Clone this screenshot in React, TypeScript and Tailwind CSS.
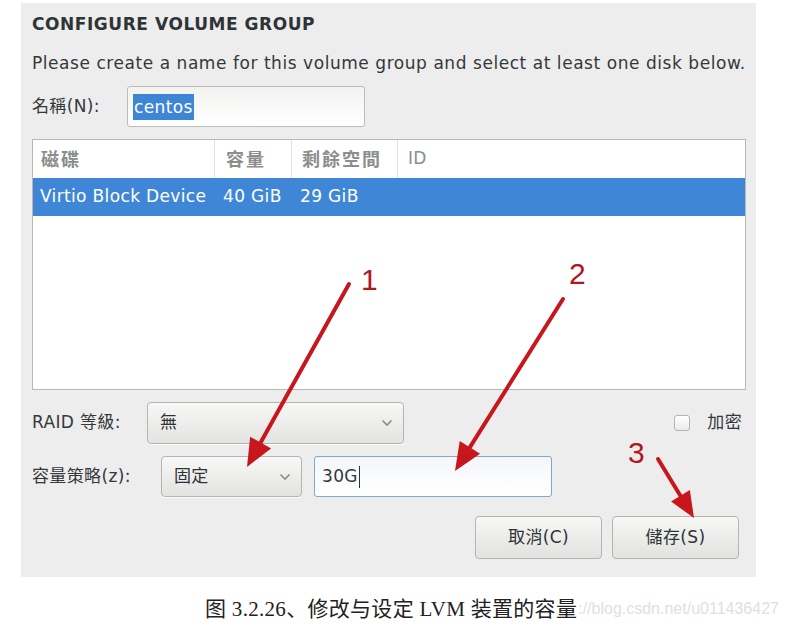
import React from "react";

const ui = "font-['DejaVu_Sans','Noto_Sans_CJK_TC',sans-serif]";

// 注释箭头：从 (x1,y1) 指向 (x2,y2)
function Arrow({ x1, y1, x2, y2, head = 28, half = 12 }: { x1: number; y1: number; x2: number; y2: number; head?: number; half?: number }) {
  const dx = x2 - x1;
  const dy = y2 - y1;
  const len = Math.hypot(dx, dy);
  const ux = dx / len;
  const uy = dy / len;
  const bx = x2 - ux * head;
  const by = y2 - uy * head;
  const pts = `${x2},${y2} ${bx - uy * half},${by + ux * half} ${bx + uy * half},${by - ux * half}`;
  return (
    <g>
      <line x1={x1} y1={y1} x2={bx + ux * 4} y2={by + uy * 4} stroke="#c8161d" strokeWidth={4} strokeLinecap="round" />
      <polygon points={pts} fill="#c8161d" />
    </g>
  );
}

function Chevron() {
  return (
    <svg width="12" height="8" viewBox="0 0 12 8" className="shrink-0">
      <path d="M1.5 1.5 L6 6 L10.5 1.5" fill="none" stroke="#8a8d8a" strokeWidth="1.6" />
    </svg>
  );
}

function Select({ value, className }: { value: string; className: string }) {
  return (
    <div
      className={`flex items-center justify-between rounded-[4px] border border-[#b4b4b0] bg-gradient-to-b from-[#f7f7f6] to-[#e3e3e1] pl-[12px] pr-[10px] text-[17px] text-[#2e3436] shadow-[0_1px_0_rgba(255,255,255,0.8)] ${className}`}
    >
      <span>{value}</span>
      <Chevron />
    </div>
  );
}

function Button({ label }: { label: string }) {
  return (
    <div className="flex h-[43px] w-[127px] items-center justify-center rounded-[4px] border border-[#b4b4b0] bg-gradient-to-b from-[#f7f7f6] to-[#e2e2e0] text-[17px] text-[#2e3436]">
      {label}
    </div>
  );
}

export default function App() {
  return (
    <div className="relative h-[627px] w-[790px] overflow-hidden bg-white">
      <div className="pl-[21px] pt-[3px]">
        <div className={`flex h-[574px] w-[735px] flex-col bg-[#ededed] pl-[11px] pr-[10px] pt-[9px] ${ui} tracking-[0.35px] text-[#33393b]`}>
          <div className="h-[24px] text-[17px] font-bold leading-[24px] tracking-[0.55px] text-[#2e3436]">CONFIGURE VOLUME GROUP</div>
          <div className="mt-[16px] h-[22px] whitespace-nowrap text-[17px] leading-[22px] tracking-[0.55px]">
            Please create a name for this volume group and select at least one disk below.
          </div>

          {/* 名稱 */}
          <div className="mt-[12px] flex h-[41px] items-center">
            <div className="w-[95px] text-[17px]">名稱(N):</div>
            <div className="flex h-[41px] w-[238px] items-center rounded-[3px] border border-[#bcbcb8] bg-gradient-to-b from-[#f2f2f1] to-white px-[5px]">
              <span className="bg-[#3d86d5] px-[1px] text-[17px] leading-[26px] text-white">centos</span>
            </div>
          </div>

          {/* 磁碟清單 */}
          <div className="mt-[12px] h-[251px] border border-[#b7b7b4] bg-white">
            <div className="flex h-[38px] items-center text-[18px] font-bold tracking-[2px] text-[#8b8e8b]">
              <div className="flex h-full w-[182px] items-center border-r border-[#e1e1df] pl-[8px]">磁碟</div>
              <div className="flex h-full w-[77px] items-center border-r border-[#e1e1df] pl-[11px]">容量</div>
              <div className="flex h-full w-[106px] items-center border-r border-[#e1e1df] pl-[10px]">剩餘空間</div>
              <div className="flex h-full items-center pl-[10px] text-[17px] font-normal tracking-[0.35px]">ID</div>
            </div>
            <div className="flex h-[38px] items-center bg-[#3f87d6] text-[17px] text-white">
              <div className="w-[182px] pl-[7px]">Virtio Block Device</div>
              <div className="w-[77px] pl-[8px]">40 GiB</div>
              <div className="w-[106px] pl-[8px]">29 GiB</div>
            </div>
          </div>

          {/* RAID */}
          <div className="mt-[12px] flex h-[42px] items-center">
            <div className="w-[115px] text-[17px]">RAID 等級:</div>
            <Select value="無" className="h-[42px] w-[257px]" />
            <div className="ml-auto flex items-center pr-[4px]">
              <div className="h-[16px] w-[16px] rounded-[3px] border border-[#b4b4b0] bg-gradient-to-b from-white to-[#ebebea]" />
              <span className="ml-[17px] text-[17px]">加密</span>
            </div>
          </div>

          {/* 容量策略 */}
          <div className="mt-[12px] flex h-[41px] items-center">
            <div className="w-[129px] text-[17px]">容量策略(z):</div>
            <Select value="固定" className="h-[41px] w-[141px]" />
            <div className="ml-[12px] flex h-[41px] w-[238px] items-center rounded-[3px] border border-[#7fa6d6] bg-gradient-to-b from-[#f4f6f9] to-white px-[7px] text-[17px]">
              <span>30G</span>
              <span className="ml-[1px] h-[22px] w-[1px] bg-[#2e3436]" />
            </div>
          </div>

          {/* 按鈕 */}
          <div className="mt-[19px] flex justify-end gap-[10px] pr-[7px]">
            <Button label="取消(C)" />
            <Button label="儲存(S)" />
          </div>
        </div>
      </div>

      <div className="mt-[18px] flex h-[28px] items-center">
        <span className="ml-[205px] whitespace-nowrap font-['Liberation_Serif','Noto_Sans_CJK_SC',serif] text-[21px] leading-[28px] tracking-[0.3px] text-[#222]">
          图 3.2.26、修改与设定 LVM 装置的容量
        </span>
        <span className="ml-[1px] whitespace-nowrap font-['Liberation_Sans',sans-serif] text-[16px] text-[#e0e0e0]">
          ://blog.csdn.net/u011436427
        </span>
      </div>

      {/* 注释 */}
      <svg className="pointer-events-none absolute left-0 top-0" width="790" height="627">
        <Arrow x1={349} y1={284} x2={247} y2={467} />
        <Arrow x1={563} y1={299} x2={455} y2={471} />
        <Arrow x1={658} y1={459} x2={694} y2={518} head={26} half={11} />
        <text x={361} y={290} fill="#b3161d" fontSize="30" fontFamily="Liberation Sans, sans-serif">1</text>
        <text x={569} y={284} fill="#b3161d" fontSize="30" fontFamily="Liberation Sans, sans-serif">2</text>
        <text x={628} y={463} fill="#b3161d" fontSize="30" fontFamily="Liberation Sans, sans-serif">3</text>
      </svg>
    </div>
  );
}
